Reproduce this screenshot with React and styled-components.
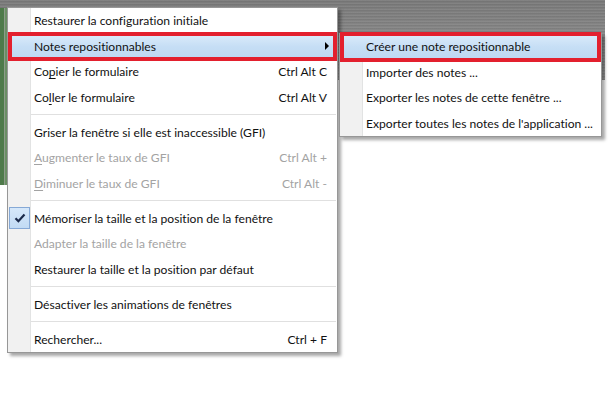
import React from 'react';
import styled, { createGlobalStyle } from 'styled-components';

const GlobalStyle = createGlobalStyle`
  html, body {
    margin: 0;
    padding: 0;
    background: #fff;
  }
  body {
    font-family: Lato, 'Noto Sans', sans-serif;
    font-variant-ligatures: none;
  }
`;

const mainItems = [
  { label: 'Restaurer la configuration initiale' },
  { label: 'Notes repositionnables', submenu: true, active: true },
  { label: 'Copier le formulaire', mnemonic: 2, shortcut: 'Ctrl Alt C' },
  { label: 'Coller le formulaire', mnemonic: 2, shortcut: 'Ctrl Alt V' },
  { separator: true },
  { label: 'Griser la fenêtre si elle est inaccessible (GFI)' },
  { label: 'Augmenter le taux de GFI', mnemonic: 0, shortcut: 'Ctrl Alt +', disabled: true },
  { label: 'Diminuer le taux de GFI', mnemonic: 0, shortcut: 'Ctrl Alt -', disabled: true },
  { separator: true },
  { label: 'Mémoriser la taille et la position de la fenêtre', checked: true },
  { label: 'Adapter la taille de la fenêtre', disabled: true },
  { label: 'Restaurer la taille et la position par défaut' },
  { separator: true },
  { label: 'Désactiver les animations de fenêtres' },
  { separator: true },
  { label: 'Rechercher...', shortcut: 'Ctrl + F' },
];

const subItems = [
  { label: 'Créer une note repositionnable', active: true },
  { label: 'Importer des notes ...' },
  { label: 'Exporter les notes de cette fenêtre ...' },
  { label: "Exporter toutes les notes de l'application ..." },
];

function Label({ text, mnemonic }) {
  if (mnemonic === undefined) return <ItemText>{text}</ItemText>;
  return (
    <ItemText>
      {text.slice(0, mnemonic)}
      <Mnemonic>{text[mnemonic]}</Mnemonic>
      {text.slice(mnemonic + 1)}
    </ItemText>
  );
}

function MenuList({ items }) {
  return items.map((item, i) =>
    item.separator ? (
      <Separator key={i} />
    ) : (
      <Row key={i} $active={item.active} $disabled={item.disabled}>
        <Gutter>
          {item.checked && (
            <CheckBox>
              <svg width="12" height="10" viewBox="0 0 12 10">
                <path d="M1.5 5.2 L4.4 8.2 L10.5 1.6" fill="none" stroke="#1b2a4a" strokeWidth="2.2" />
              </svg>
            </CheckBox>
          )}
        </Gutter>
        <Label text={item.label} mnemonic={item.mnemonic} />
        {item.shortcut && <Shortcut>{item.shortcut}</Shortcut>}
        {item.submenu && <Arrow />}
      </Row>
    )
  );
}

export default function App() {
  return (
    <>
      <GlobalStyle />
      <Desktop>
        <Backdrop>
          <MetalBar />
          <GreenEdge />
        </Backdrop>
        <MainMenu>
          <MenuList items={mainItems} />
        </MainMenu>
        <SubMenu>
          <MenuList items={subItems} />
        </SubMenu>
      </Desktop>
    </>
  );
}

const Desktop = styled.div`
  position: relative;
  width: 614px;
  height: 397px;
  overflow: hidden;
  background: #fff;
`;

const Backdrop = styled.div`
  display: grid;
  width: 605px;
  grid-template-columns: 7px 1fr;
  grid-template-rows: 8px 72px 105px;
`;

const MetalBar = styled.div`
  grid-column: 1 / 3;
  grid-row: 1 / 3;
  background:
    repeating-linear-gradient(
      180deg,
      rgba(255, 255, 255, 0.06) 0 1px,
      rgba(0, 0, 0, 0.05) 1px 2px,
      rgba(255, 255, 255, 0) 2px 3px
    ),
    linear-gradient(180deg, #7a7a7a 0%, #8c8c8c 60%, #979797 100%);
`;

const GreenEdge = styled.div`
  grid-column: 1;
  grid-row: 2 / 4;
  background: linear-gradient(90deg, #4e7a4a 0 4px, #8d9c8a 4px 5px, #6a8f64 5px);
`;

const MenuPanel = styled.div`
  position: absolute;
  box-sizing: border-box;
  border: 1px solid #979797;
  padding: 0 2px;
  display: flex;
  flex-direction: column;
  background: linear-gradient(
    90deg,
    #f1f1f1 0 22px,
    #e2e3e3 22px 23px,
    #ffffff 23px
  );
  box-shadow: 3px 3px 3px rgba(0, 0, 0, 0.35);
  font-size: 12.1px;
  color: #111;
`;

const MainMenu = styled(MenuPanel)`
  left: 7px;
  top: 7px;
  width: 331px;
`;

const SubMenu = styled(MenuPanel)`
  left: 339px;
  top: 33px;
  width: 263px;
`;

const Row = styled.div`
  position: relative;
  display: flex;
  align-items: center;
  height: 25.5px;
  padding-right: 8px;
  white-space: nowrap;
  color: ${(p) => (p.$disabled ? '#a3a3a3' : '#111')};
  background: ${(p) =>
    p.$active ? 'linear-gradient(180deg, #dcecfb 0%, #c6def5 50%, #bdd8f2 100%)' : 'transparent'};
  outline: ${(p) => (p.$active ? '4px solid #e3202e' : 'none')};
  outline-offset: -2px;
  z-index: ${(p) => (p.$active ? 1 : 0)};
`;

const Gutter = styled.div`
  flex: 0 0 24px;
  height: 100%;
  display: flex;
  align-items: center;
`;

const CheckBox = styled.div`
  box-sizing: border-box;
  width: 21px;
  height: 22px;
  margin-left: -1px;
  border: 1px solid #86a9d6;
  background: linear-gradient(180deg, #d6e8fa, #c2dbf4);
  display: flex;
  align-items: center;
  justify-content: center;
`;

const ItemText = styled.span`
  flex: 1;
`;

const Mnemonic = styled.span`
  text-decoration: underline;
  text-underline-offset: 2px;
`;

const Shortcut = styled.span`
  margin-left: 24px;
`;

const Arrow = styled.span`
  width: 0;
  height: 0;
  margin-right: -2px;
  border-top: 4px solid transparent;
  border-bottom: 4px solid transparent;
  border-left: 4px solid #000;
`;

const Separator = styled.div`
  height: 9.5px;
  margin-left: 21px;
  margin-right: -1px;
  background: linear-gradient(180deg, transparent 0 4px, #e0e0e0 4px 5px, #fff 5px);
`;
